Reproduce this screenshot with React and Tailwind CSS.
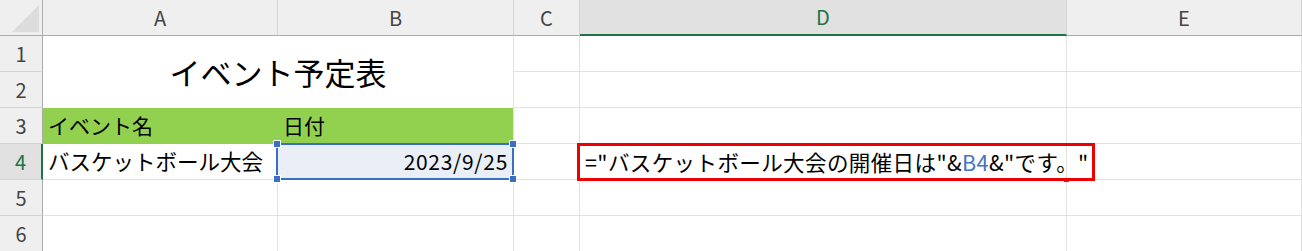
const jp = { fontFamily: '"Noto Sans CJK JP", "Noto Sans", sans-serif' }

function ColHead({ label, active }) {
  return (
    <div
      className={
        'flex items-center justify-center text-[20px] border-r border-[#d4d4d4] ' +
        (active
          ? 'bg-[#e1e1e1] text-[#217346] border-b-2 border-b-[#217346]'
          : 'bg-[#efefef] text-[#444] border-b border-b-[#ababab]')
      }
    >
      {label}
    </div>
  )
}

function RowHead({ n, active }) {
  return (
    <div
      className={
        'flex items-center justify-center text-[20px] border-b border-[#d4d4d4] ' +
        (active
          ? 'bg-[#e1e1e1] text-[#217346] border-r-2 border-r-[#217346]'
          : 'bg-[#efefef] text-[#444] border-r border-r-[#ababab]')
      }
    >
      {n}
    </div>
  )
}

function Cell({ className = '', children }) {
  return <div className={'border-r border-b border-[#e1e1e1] bg-white ' + className}>{children}</div>
}

function Handle({ className }) {
  return <div className={'absolute w-[8px] h-[8px] bg-[#3b6fc4] border border-white ' + className} />
}

export default function App() {
  return (
    <div className="w-[1302px] h-[251px] overflow-hidden bg-white" style={jp}>
      <div className="grid grid-cols-[43px_235px_236px_66px_487px_235px] grid-rows-[36px_repeat(6,36px)]">
        {/* corner */}
        <div className="bg-[#efefef] border-r border-b border-[#ababab] relative">
          <svg className="absolute left-0 top-0" width="42" height="35">
            <polygon points="39,5 39,32 12,32" fill="#dcdcdc" />
          </svg>
        </div>
        <ColHead label="A" />
        <ColHead label="B" />
        <ColHead label="C" />
        <ColHead label="D" active />
        <ColHead label="E" />

        {/* row 1 */}
        <RowHead n="1" />
        <div className="col-span-2 row-span-2 bg-white border-r border-[#e1e1e1] flex items-center justify-center text-[31px] text-black">
          イベント予定表
        </div>
        <Cell />
        <Cell />
        <Cell />

        {/* row 2 */}
        <RowHead n="2" />
        <Cell />
        <Cell />
        <Cell />

        {/* row 3 */}
        <RowHead n="3" />
        <div className="bg-[#92d050] border-r border-b border-[#92d050] flex items-center pl-[5px] text-[21px] text-black">
          イベント名
        </div>
        <div className="bg-[#92d050] border-r border-[#e1e1e1] border-b border-b-[#92d050] flex items-center pl-[5px] text-[21px] text-black">
          日付
        </div>
        <Cell />
        <Cell />
        <Cell />

        {/* row 4 */}
        <RowHead n="4" active />
        <Cell className="flex items-center pl-[5px] text-[21.5px] text-black whitespace-nowrap">
          バスケットボール大会
        </Cell>
        <div className="relative bg-[#e9eef7] border-r border-b border-[#e1e1e1] flex items-center justify-end pr-[5px] text-[21px] tracking-[0.7px] text-black">
          2023/9/25
          <div className="absolute -left-[2px] -top-[1px] w-[238px] h-[37px] border-2 border-[#3b6fc4]">
            <Handle className="-left-[5px] -top-[5px]" />
            <Handle className="-right-[5px] -top-[5px]" />
            <Handle className="-left-[5px] -bottom-[5px]" />
            <Handle className="-right-[5px] -bottom-[5px]" />
          </div>
        </div>
        <Cell />
        <div className="relative z-10 bg-white border-r border-b border-[#e1e1e1]">
          <div className="absolute -right-[3px] -bottom-[3px] w-[5px] h-[4px] bg-[#217346]" />
          <div className="absolute -left-[3px] -top-[1px] w-[518px] h-[38px] border-[3px] border-[#ee0000] flex items-center pl-[5px] text-[21.5px] tracking-[0.4px] text-black whitespace-nowrap">
            ="バスケットボール大会の開催日は"&amp;<span className="text-[#4472c4]">B4</span>&amp;"です。"
          </div>
        </div>
        <Cell />

        {/* row 5 */}
        <RowHead n="5" />
        <Cell />
        <Cell />
        <Cell />
        <Cell />
        <Cell />

        {/* row 6 */}
        <RowHead n="6" />
        <Cell />
        <Cell />
        <Cell />
        <Cell />
        <Cell />
      </div>
    </div>
  )
}
